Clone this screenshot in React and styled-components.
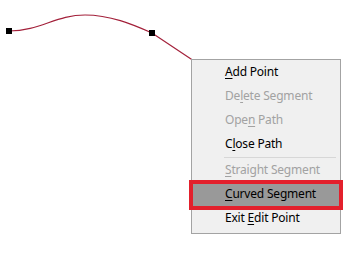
import React from 'react';
import styled, { createGlobalStyle } from 'styled-components';

const GlobalStyle = createGlobalStyle`
  html, body {
    margin: 0;
    padding: 0;
    background: #ffffff;
  }
`;

const Canvas = styled.div`
  position: relative;
  width: 347px;
  height: 253px;
  overflow: hidden;
  background: #ffffff;
  font-family: "Noto Sans", "Open Sans", sans-serif;
`;

const Drawing = styled.svg`
  position: absolute;
  left: 0;
  top: 0;
`;

const Menu = styled.ul`
  position: absolute;
  left: 191px;
  top: 59px;
  width: 148px;
  margin: 0;
  padding: 1px 0 2px;
  list-style: none;
  background: #f0f0f0;
  border: 1px solid #a3a3a3;
`;

const Item = styled.li`
  position: relative;
  height: 24px;
  line-height: 22px;
  padding-left: 33px;
  font-size: 12px;
  letter-spacing: -0.2px;
  white-space: pre;
  color: ${(p) => (p.disabled ? '#a2a2a2' : '#000000')};
  background: ${(p) => (p.active ? '#999999' : 'transparent')};
  outline: ${(p) => (p.active ? '4px solid #e3202c' : 'none')};
  outline-offset: -1px;
  z-index: ${(p) => (p.active ? 1 : 0)};
`;

const Key = styled.span`
  text-decoration: underline;
  text-underline-offset: 2px;
`;

const Separator = styled.li`
  height: 1px;
  margin: 0 4px 1px 32px;
  background: #d7d7d7;
`;

const items = [
  { pre: '', key: 'A', post: 'dd Point' },
  { pre: 'De', key: 'l', post: 'ete Segment', disabled: true },
  { pre: 'Ope', key: 'n', post: ' Path', disabled: true },
  { pre: 'C', key: 'l', post: 'ose Path' },
  'sep',
  { pre: '', key: 'S', post: 'traight Segment', disabled: true },
  { pre: '', key: 'C', post: 'urved Segment', active: true },
  { pre: 'Exit ', key: 'E', post: 'dit Point' },
];

export default function App() {
  return (
    <>
      <GlobalStyle />
      <Canvas>
        <Drawing width="347" height="253" viewBox="0 0 347 253">
          <path
            d="M9 31 C40 31 56 15 85 15 C110 15 132 24 152 33 L200 65"
            fill="none"
            stroke="#a3203a"
            strokeWidth="1.2"
          />
          <rect x="6" y="28" width="6" height="6" fill="#000" />
          <rect x="149" y="30" width="6" height="6" fill="#000" />
        </Drawing>
        <Menu>
          {items.map((it, i) =>
            it === 'sep' ? (
              <Separator key={i} />
            ) : (
              <Item key={i} disabled={it.disabled} active={it.active}>
                {it.pre}
                <Key>{it.key}</Key>
                {it.post}
              </Item>
            )
          )}
        </Menu>
      </Canvas>
    </>
  );
}
